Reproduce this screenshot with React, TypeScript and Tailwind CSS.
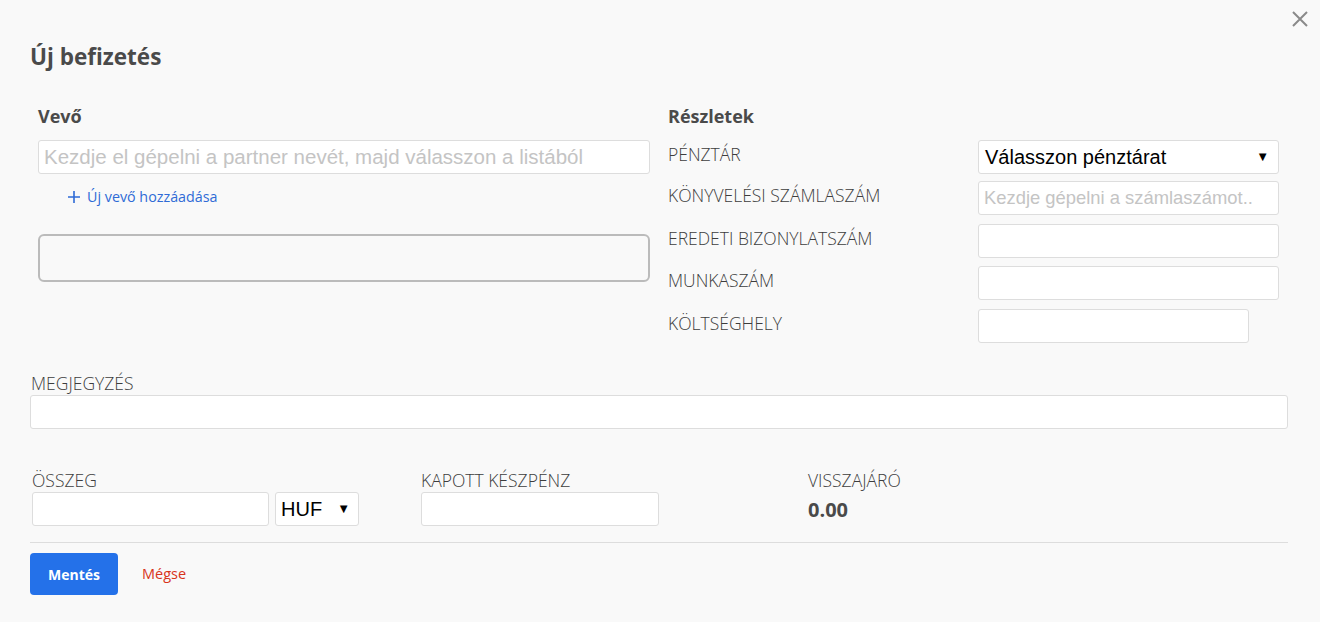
import React from "react";

const label = "text-[17.5px] leading-[20px] text-[#3d3d3d] uppercase font-['Open_Sans',sans-serif] font-light";
const field = "h-[34px] bg-white border border-[#ddd] rounded-[3px] box-border";

function Row({ name, className, children }: { name: string; className?: string; children: React.ReactNode }) {
  return (
    <div className={`flex items-center ${className ?? ""}`}>
      <div className={`${label} w-[310px] pb-[6px]`}>{name}</div>
      {children}
    </div>
  );
}

export default function App() {
  return (
    <div className="w-[1320px] h-[622px] bg-[#f9f9f9] relative font-['Open_Sans',sans-serif] overflow-hidden">
      <button className="absolute right-[10px] top-[9px] text-[#888]">
        <svg width="20" height="20" viewBox="0 0 20 20">
          <path d="M3 3 L17 17 M17 3 L3 17" stroke="#8a8a8a" strokeWidth="2" />
        </svg>
      </button>

      <div className="px-[30px] pt-[40px]">
        <h1 className="text-[22.5px] leading-[34px] font-bold text-[#4a4a4a]">Új befizetés</h1>

        <div className="flex mt-[29px]">
          <div className="w-[620px] pl-[8px]">
            <h2 className="text-[18px] leading-[26px] font-bold text-[#4a4a4a]">Vevő</h2>
            <div className={`${field} w-[612px] mt-[11px] flex items-center px-[5px] text-[20.5px] text-[#c4c4c4] font-['Liberation_Sans',sans-serif] whitespace-nowrap overflow-hidden`}>
              Kezdje el gépelni a partner nevét, majd válasszon a listából
            </div>
            <div className="flex items-center gap-[6px] mt-[12px] ml-[29px] text-[14.3px] text-[#2f6bd6]">
              <svg width="14" height="14" viewBox="0 0 14 14">
                <path d="M7 1 V13 M1 7 H13" stroke="#2f6bd6" strokeWidth="1.6" />
              </svg>
              <span>Új vevő hozzáadása</span>
            </div>
            <div className="w-[612px] h-[48px] mt-[27px] border-2 border-[#bbb] rounded-[6px]" />
          </div>

          <div className="flex-1 pl-[18px]">
            <h2 className="text-[18px] leading-[26px] font-bold text-[#4a4a4a]">Részletek</h2>
            <div className="flex flex-col mt-[11px]">
              <Row name="Pénztár">
                <div className={`${field} h-[32px] w-[301px] flex items-center justify-between pl-[6px] pr-[9px] text-[20px] text-black font-['Liberation_Sans',sans-serif]`}>
                  <span>Válasszon pénztárat</span>
                  <span className="text-[13px]">▼</span>
                </div>
              </Row>
              <Row name="Könyvelési számlaszám" className="mt-[7px]">
                <div className={`${field} h-[33px] w-[301px] flex items-center px-[5px] text-[18.4px] text-[#c4c4c4] font-['Liberation_Sans',sans-serif] whitespace-nowrap overflow-hidden`}>
                  Kezdje gépelni a számlaszámot..
                </div>
              </Row>
              <Row name="Eredeti bizonylatszám" className="mt-[9px]">
                <div className={`${field} w-[301px]`} />
              </Row>
              <Row name="Munkaszám" className="mt-[8px]">
                <div className={`${field} w-[301px]`} />
              </Row>
              <Row name="Költséghely" className="mt-[9px]">
                <div className={`${field} w-[271px]`} />
              </Row>
            </div>
          </div>
        </div>

        <div className="mt-[30px]">
          <div className={`${label} ml-[1px]`}>Megjegyzés</div>
          <div className={`${field} w-[1258px] mt-[2px]`} />
        </div>

        <div className="flex mt-[41px]">
          <div className="w-[391px] pl-[2px]">
            <div className={label}>Összeg</div>
            <div className="flex gap-[6px] mt-[2px]">
              <div className={`${field} w-[237px]`} />
              <div className={`${field} w-[84px] flex items-center justify-between pl-[5px] pr-[8px] text-[20px] text-black font-['Liberation_Sans',sans-serif]`}>
                <span>HUF</span>
                <span className="text-[13px]">▼</span>
              </div>
            </div>
          </div>
          <div className="w-[387px]">
            <div className={label}>Kapott készpénz</div>
            <div className={`${field} w-[238px] mt-[2px]`} />
          </div>
          <div>
            <div className={label}>Visszajáró</div>
            <div className="text-[20px] leading-[28px] font-bold text-[#4a4a4a] mt-[6px]">0.00</div>
          </div>
        </div>

        <div className="w-[1258px] border-t border-[#ddd] mt-[16px]" />

        <div className="flex items-center mt-[10px]">
          <button className="w-[88px] h-[42px] bg-[#2471e9] rounded-[4px] text-white text-[14px] font-bold">Mentés</button>
          <span className="ml-[24px] text-[14.5px] text-[#d8341b]">Mégse</span>
        </div>
      </div>
    </div>
  );
}
